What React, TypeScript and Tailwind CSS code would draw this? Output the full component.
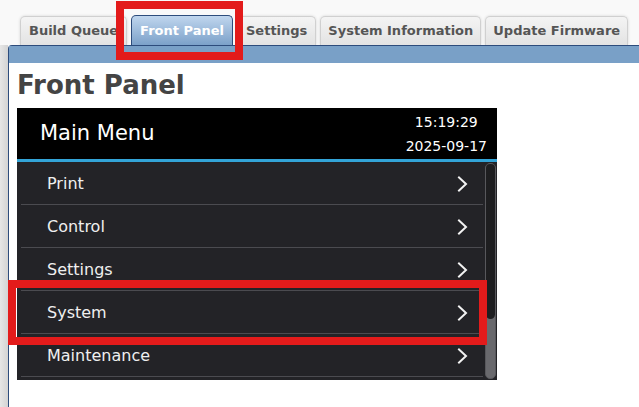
import React from "react";

const font = { fontFamily: '"DejaVu Sans", Verdana, sans-serif' };

function Chevron() {
  return (
    <svg width="11" height="16" viewBox="0 0 11 16" className="shrink-0">
      <path d="M2 1.5 L9 8 L2 14.5" fill="none" stroke="#f2f2f2" strokeWidth="2" strokeLinecap="square" />
    </svg>
  );
}

const items = ["Print", "Control", "Settings", "System", "Maintenance"];

export default function App() {
  return (
    <div className="relative w-[639px] h-[407px] overflow-hidden bg-[#f9f9f9]" style={font}>
      {/* tab row */}
      <div className="flex items-end h-[45px] pl-[20px] gap-[4px]">
        <div className="h-[29px] px-[8px] flex items-center rounded-t-[5px] border border-b-0 border-[#d0d0d0] bg-gradient-to-b from-[#f4f4f4] to-[#e3e3e3] text-[13px] font-bold text-[#555] shadow-[0_0_3px_rgba(0,0,0,0.15)]">
          Build Queue
        </div>
        <div className="h-[30px] px-[8px] flex items-center rounded-t-[5px] border border-b-0 border-[#2d4c7c] bg-gradient-to-b from-[#c0d6ee] to-[#7ca1c9] text-[13px] font-bold text-white">
          Front Panel
        </div>
        <div className="h-[29px] px-[8px] flex items-center rounded-t-[5px] border border-b-0 border-[#d0d0d0] bg-gradient-to-b from-[#f4f4f4] to-[#e3e3e3] text-[13px] font-bold text-[#555] shadow-[0_0_3px_rgba(0,0,0,0.15)]">
          Settings
        </div>
        <div className="h-[29px] px-[7px] flex items-center rounded-t-[5px] border border-b-0 border-[#d0d0d0] bg-gradient-to-b from-[#f4f4f4] to-[#e3e3e3] text-[13px] font-bold text-[#555] shadow-[0_0_3px_rgba(0,0,0,0.15)]">
          System Information
        </div>
        <div className="h-[29px] px-[7px] flex items-center rounded-t-[5px] border border-b-0 border-[#d0d0d0] bg-gradient-to-b from-[#f4f4f4] to-[#e3e3e3] text-[13px] font-bold text-[#555] shadow-[0_0_3px_rgba(0,0,0,0.15)]">
          Update Firmware
        </div>
      </div>

      {/* body */}
      <div className="flex h-[362px]">
        <div className="w-[8px] bg-gradient-to-r from-[#e6e6e6] to-[#d3d3d3]" />
        <div className="flex-1 flex flex-col border-l border-t border-[#2d4c7c] rounded-tl-[4px] bg-white">
          <div className="h-[17px] bg-[#79a0c7]" />
          <div className="pl-[8px] flex flex-col">
            <h1 className="mt-[9px] text-[26px] leading-[26px] font-bold text-[#444]">Front Panel</h1>
            <div className="mt-[10px] w-[480px] h-[272px] bg-[#232327] flex flex-col">
              {/* header */}
              <div className="h-[51px] bg-black flex items-center justify-between">
                <div className="pl-[23px] text-[21px] leading-[21px] text-white">Main Menu</div>
                <div className="pr-[10px] flex flex-col items-center text-[14px] leading-[24px] text-white">
                  <span>15:19:29</span>
                  <span>2025-09-17</span>
                </div>
              </div>
              <div className="h-[3px] bg-[#33a4d7]" />
              <div className="flex flex-1">
                <div className="flex-1 pl-[4px] pr-[2px] flex flex-col">
                  {items.map((t) => (
                    <div key={t} className="h-[43px] shrink-0 border-b border-[#4b4b50] flex items-center justify-between pl-[26px] pr-[15px] pt-[1px]">
                      <span className="text-[16px] leading-[16px] text-[#efefef]">{t}</span>
                      <Chevron />
                    </div>
                  ))}
                </div>
                <div className="w-[11px] mt-[1px] mb-[1px] mr-[1px] rounded-[5px] border border-[#58585c] bg-[#69696d] flex flex-col overflow-hidden">
                  <div className="h-[155px] bg-[#1e1e20] rounded-b-[5px]" />
                </div>
              </div>
            </div>
          </div>
        </div>
      </div>

      {/* red highlight boxes */}
      <div className="absolute left-[116px] top-[1px] w-[127px] h-[59px] border-[8px] border-[#e31b1b]" />
      <div className="absolute left-[8px] top-[280px] w-[479px] h-[65px] border-[8px] border-[#e31b1b]" />
    </div>
  );
}
